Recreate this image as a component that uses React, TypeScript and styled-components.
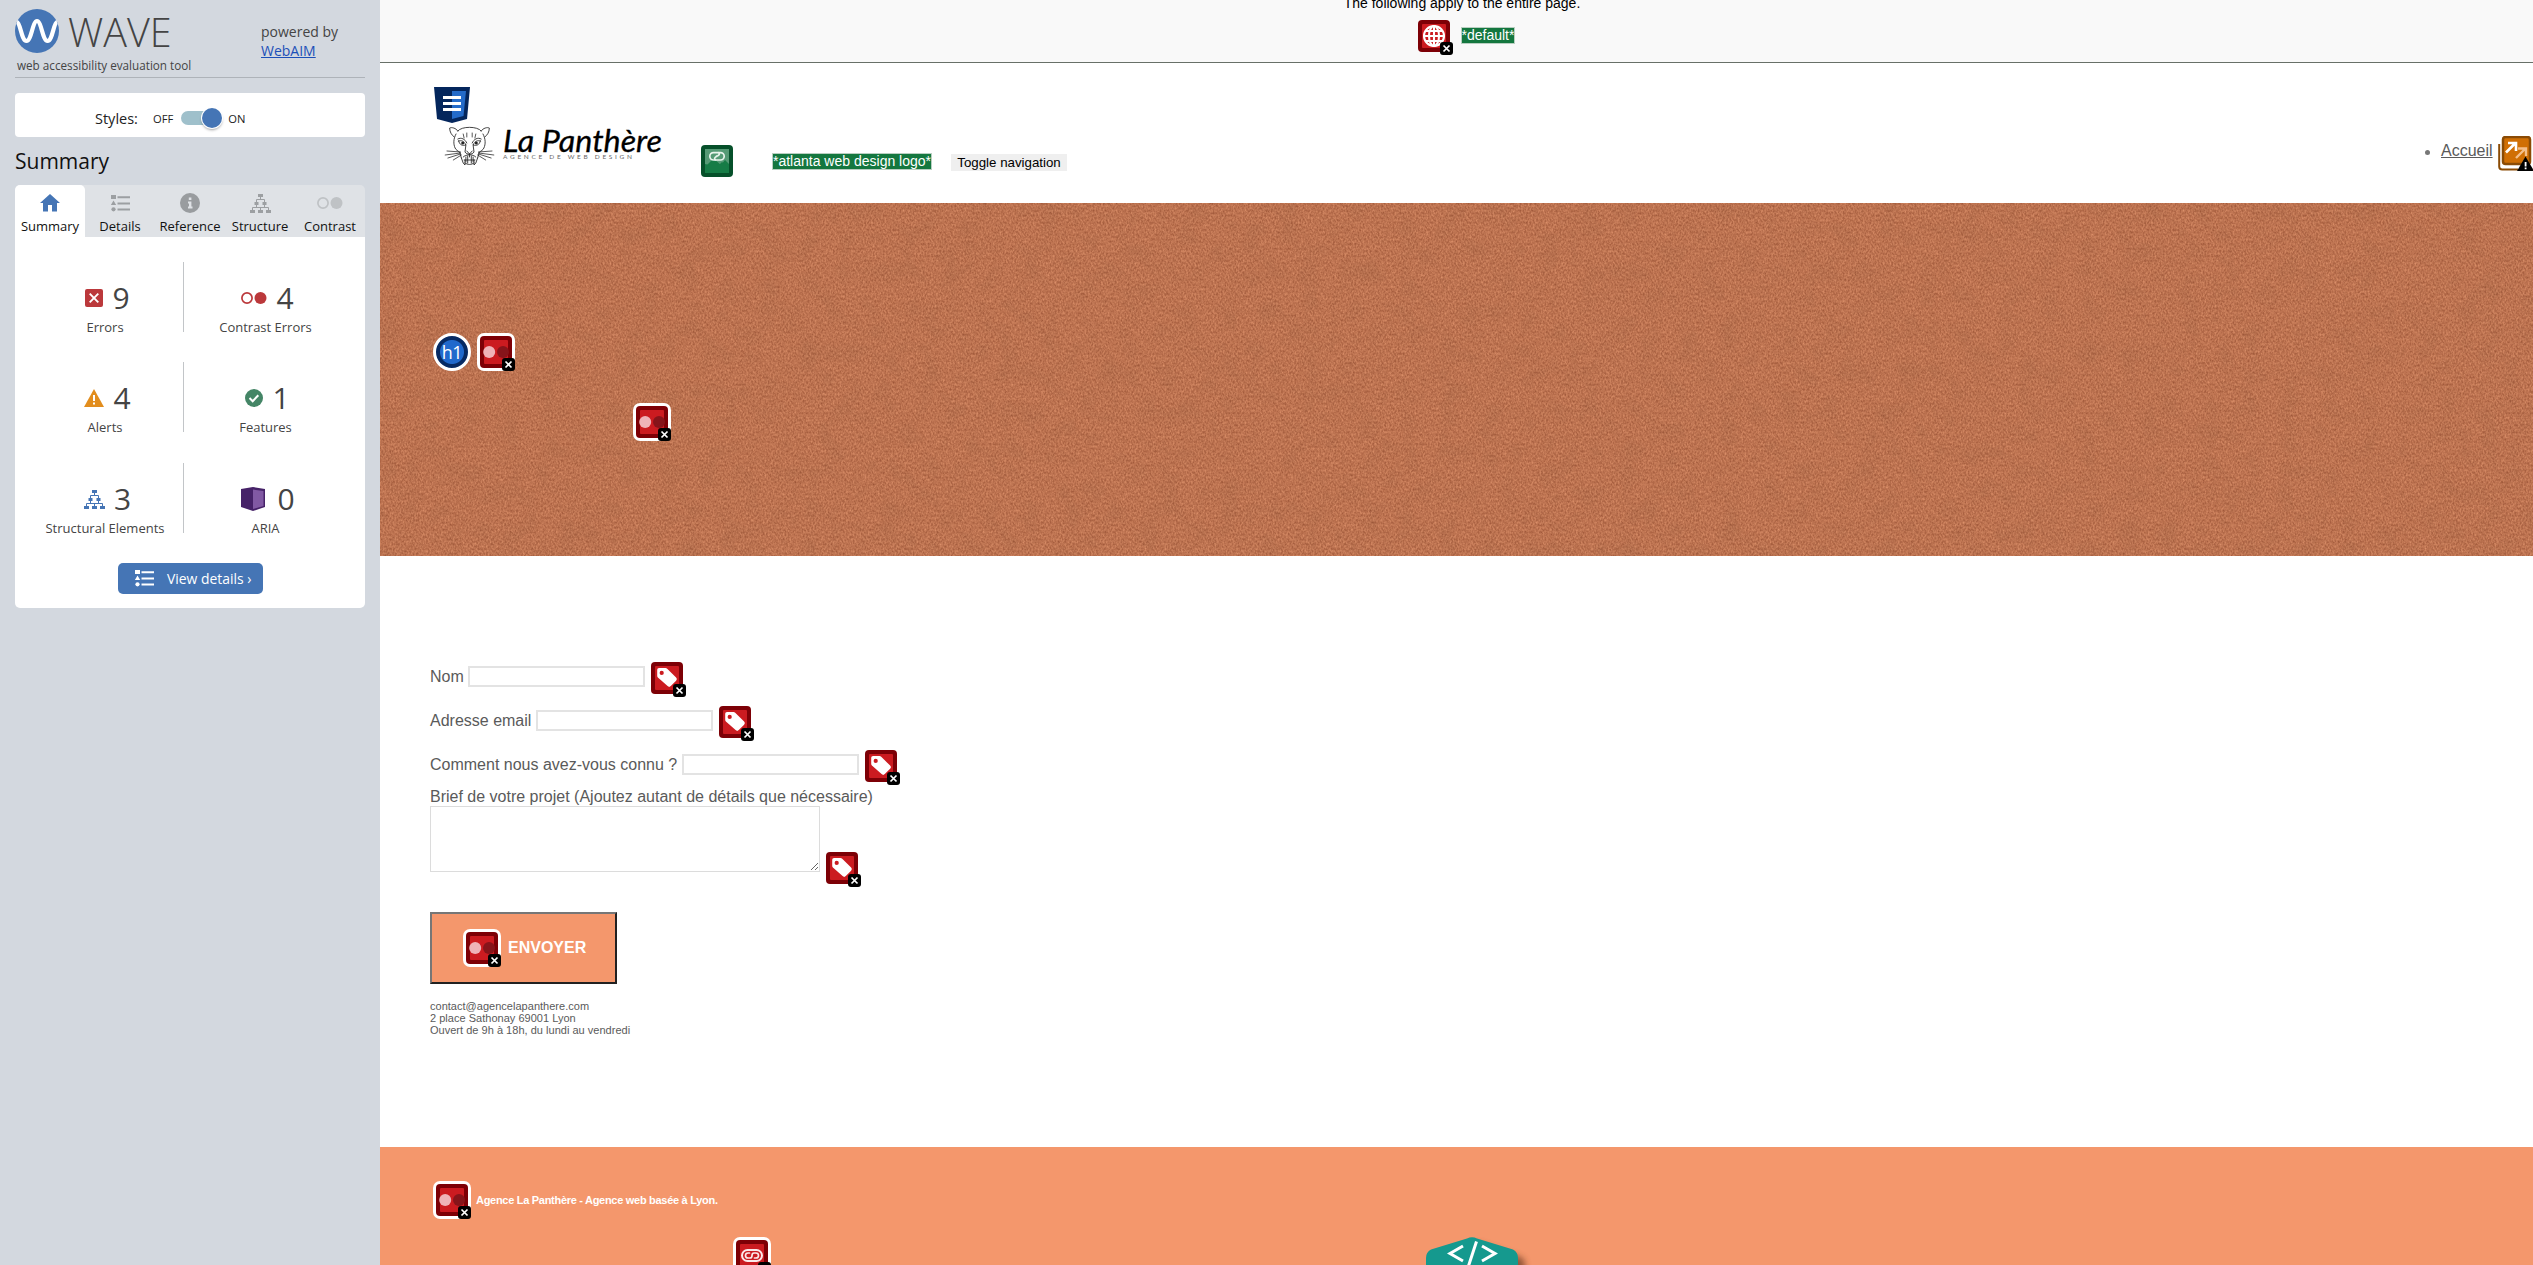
import React from "react";
import styled, { createGlobalStyle, css } from "styled-components";

const GlobalStyle = createGlobalStyle`
  * { box-sizing: border-box; }
  html, body { margin: 0; padding: 0; }
  body { width: 2533px; height: 1265px; overflow: hidden; background: #fff; }
`;

const OPEN = `"Open Sans", "Noto Sans", sans-serif`;
const ARIAL = `"Liberation Sans", Arial, sans-serif`;

const Screen = styled.div`
  display: flex;
  width: 2533px;
  height: 1265px;
  overflow: hidden;
`;

/* ---------- Sidebar ---------- */

const Sidebar = styled.aside`
  flex: 0 0 380px;
  padding: 9px 15px 0;
  background: #d3d8df;
  font-family: ${OPEN};
  color: #444;
`;

const BrandBar = styled.header`
  display: flex;
  height: 69px;
  border-bottom: 1px solid #aeb3b9;
`;

const Brand = styled.div`
  width: 246px;
`;

const BrandRow = styled.div`
  display: flex;
  gap: 9px;
  height: 44px;
`;

const BrandName = styled.span`
  padding-top: 1px;
  font-size: 39.5px;
  font-weight: 300;
  line-height: 44px;
`;

const Tagline = styled.div`
  margin: 4px 0 0 2px;
  font-size: 11.7px;
  line-height: 16px;
  white-space: nowrap;
`;

const Powered = styled.div`
  padding-top: 13px;
  font-size: 14px;
  line-height: 19px;
  a { color: #1c50b8; }
`;

const StylesCard = styled.div`
  display: flex;
  align-items: center;
  height: 44px;
  margin-top: 15px;
  padding: 6px 0 0 80px;
  border-radius: 4px;
  background: #fff;
  color: #222;
`;

const StylesLabel = styled.span`
  width: 58px;
  font-size: 14.5px;
`;

const SwitchText = styled.span`
  font-size: 11.2px;
`;

const Switch = styled.span`
  display: flex;
  justify-content: flex-end;
  align-items: center;
  width: 41px;
  height: 14px;
  margin: 0 6px 0 8px;
  border-radius: 7px;
  background: linear-gradient(to right, #9fc0cb 36px, transparent 36px);
`;

const Knob = styled.span`
  width: 20px;
  height: 20px;
  border-radius: 50%;
  background: #4575b5;
  box-shadow: 0 0 0 1px #fff, 0 2px 3px rgba(0, 0, 0, 0.4);
`;

const SideTitle = styled.h2`
  margin: 10px 0 10px;
  font-size: 21px;
  font-weight: 400;
  line-height: 28px;
  color: #111;
`;

const Tabs = styled.nav`
  display: flex;
  height: 52px;
  border-radius: 5px 5px 0 0;
  background: #dfe2e6;
`;

const Tab = styled.div<{ $active?: boolean }>`
  display: flex;
  flex: 0 0 70px;
  flex-direction: column;
  align-items: center;
  padding-top: 5px;
  border-radius: 5px 5px 0 0;
  background: ${(p) => (p.$active ? "#fff" : "transparent")};
  color: ${(p) => (p.$active ? "#4575b5" : "#9c9fa2")};
`;

const TabIcon = styled.span`
  display: flex;
  align-items: center;
  justify-content: center;
  height: 26px;
`;

const TabLabel = styled.span`
  margin-top: 1px;
  font-size: 13px;
  line-height: 18px;
  color: #111;
`;

const Panel = styled.section`
  height: 371px;
  padding: 25px 12px 0;
  border-radius: 0 0 5px 5px;
  background: #fff;
`;

const StatGrid = styled.div`
  display: grid;
  grid-template-columns: 156px 1px 163px;
  grid-template-rows: 100px 101px 100px;
`;

const StatDivider = styled.span`
  height: 70px;
  background: #c2c5c8;
`;

const Stat = styled.div`
  display: flex;
  flex-direction: column;
  align-items: center;
  padding-top: 16px;
`;

const StatLine = styled.div<{ $gap?: number; $shift?: number }>`
  display: flex;
  align-items: center;
  gap: ${(p) => p.$gap || 9}px;
  height: 40px;
  margin-left: ${(p) => p.$shift || 0}px;
`;

const StatNumber = styled.span`
  font-size: 30px;
  font-weight: 400;
  line-height: 40px;
  color: #444;
`;

const StatLabel = styled.span`
  font-size: 13px;
  line-height: 18px;
`;

const DetailsButton = styled.button`
  display: flex;
  align-items: center;
  gap: 13px;
  width: 145px;
  height: 31px;
  margin: 0 0 0 91px;
  padding: 0 0 1px 17px;
  border: 0;
  border-radius: 5px;
  background: #4575b5;
  color: #fff;
  font: 13.9px ${OPEN};
  white-space: nowrap;
`;

/* ---------- Page ---------- */

const Page = styled.main`
  flex: 1;
  min-width: 0;
  font-family: ${ARIAL};
  font-size: 16px;
  color: #5a5a5a;
`;

const Notice = styled.div`
  display: flex;
  flex-direction: column;
  align-items: center;
  height: 63px;
  padding-left: 11px;
  border-bottom: 1px solid #687068;
  background: #f9f9f9;
  color: #000;
`;

const NoticeText = styled.div`
  height: 20px;
  margin-top: -5px;
  font-size: 14px;
  line-height: 16px;
`;

const NoticeRow = styled.div`
  display: flex;
  gap: 11px;
  padding: 5px 0 0 9px;
`;

const AltText = styled.span<{ $top: number }>`
  height: 17px;
  margin-top: ${(p) => p.$top}px;
  padding: 0 1px;
  background: #14773f;
  outline: 1px solid #b9cfc1;
  outline-offset: -1px;
  color: #fff;
  font-size: 14px;
  line-height: 17px;
  white-space: nowrap;
`;

const SiteHeader = styled.header`
  display: flex;
  height: 140px;
  padding: 24px 0 0 54px;
`;

const LogoColumn = styled.div`
  display: flex;
  flex-direction: column;
  width: 267px;
`;

const HeaderRow = styled.div`
  display: flex;
  flex: 1;
  padding-top: 58px;
`;

const HeaderAlt = styled.div`
  display: flex;
  width: 179px;
  margin-left: 39px;
`;

const ToggleButton = styled.button`
  width: 116px;
  height: 17px;
  margin-top: 9px;
  padding: 0;
  border: 0;
  background: #efefef;
  color: #000;
  font: 13.3px/17px ${ARIAL};
  white-space: nowrap;
`;

const Menu = styled.ul`
  display: flex;
  width: 108px;
  margin: 49px 0 0;
  padding: 0;
  list-style: none;
`;

const MenuItem = styled.li`
  display: flex;
  gap: 5px;
  &::before {
    content: "";
    width: 5px;
    height: 5px;
    margin: 14px 6px 0 0;
    border-radius: 50%;
    background: #777;
  }
  a {
    margin-top: 6px;
    line-height: 18px;
    color: #5a5a5a;
    text-decoration: underline;
  }
`;

const Hero = styled.section`
  display: grid;
  height: 353px;
  overflow: hidden;
  background: #bd7351;
  > * { grid-area: 1 / 1; }
`;

const HeroMarks = styled.div`
  z-index: 1;
  padding: 130px 0 0 53px;
`;

const MarkRow = styled.div<{ $indent?: number; $gapTop?: number }>`
  display: flex;
  gap: 6px;
  margin: ${(p) => p.$gapTop || 0}px 0 0 ${(p) => p.$indent || 0}px;
`;

const FormArea = styled.section`
  height: 591px;
  padding: 106px 0 0 50px;
`;

const Field = styled.div`
  display: flex;
  height: 44px;
`;

const Label = styled.label<{ $width?: number }>`
  width: ${(p) => (p.$width ? `${p.$width}px` : "auto")};
  height: 18px;
  margin-top: 6px;
  line-height: 18px;
  white-space: nowrap;
`;

const Input = styled.input`
  width: 177px;
  height: 21px;
  margin: 4px 6px 0 5px;
  padding: 0;
  border: 2px solid #e3e3e3;
  background: #fff;
`;

const AreaLabel = styled(Label)`
  display: block;
  margin-top: -6px;
`;

const AreaRow = styled.div`
  display: flex;
  gap: 6px;
  height: 106px;
`;

const Area = styled.textarea`
  width: 390px;
  height: 66px;
  border: 1px solid #dcdcdc;
  background: #fff;
`;

const AreaMark = styled.div`
  margin-top: 46px;
`;

const SendButton = styled.button`
  display: flex;
  gap: 7px;
  width: 187px;
  height: 72px;
  padding: 15px 0 0 31px;
  border: 2px solid;
  border-color: #767676 #212121 #212121 #767676;
  background: #f4976c;
  color: #fff;
  font: bold 16px/18px ${ARIAL};
  span:last-child { margin-top: 10px; }
`;

const ButtonText = styled.span`
  height: 18px;
`;

const Contact = styled.address`
  margin-top: 16px;
  font-size: 11px;
  font-style: normal;
  letter-spacing: 0.02px;
  line-height: 12px;
  white-space: nowrap;
`;

const Footer = styled.footer`
  height: 118px;
  padding: 34px 0 0 53px;
  background: #f4976c;
  overflow: hidden;
`;

const FooterText = styled.span`
  margin: 12px 0 0 -1px;
  color: #fff;
  font-size: 11px;
  font-weight: 700;
  letter-spacing: -0.29px;
  line-height: 14px;
`;

const FooterIcons = styled.div`
  display: flex;
  gap: 655px;
  padding: 18px 0 0 300px;
`;

/* ---------- Marks ---------- */

type Tone = "red" | "green";

const MarkBox = styled.span<{ $ring?: boolean }>`
  position: relative;
  display: block;
  flex: none;
  width: ${(p) => (p.$ring ? 38 : 32)}px;
  height: ${(p) => (p.$ring ? 38 : 32)}px;
  ${(p) =>
    p.$ring &&
    css`
      padding: 3px;
      border-radius: 7px;
      background: #fff;
    `}
  > svg { display: block; }
`;

const Badge = styled.i<{ $ring?: boolean }>`
  position: absolute;
  right: ${(p) => (p.$ring ? 0 : -3)}px;
  bottom: ${(p) => (p.$ring ? 0 : -3)}px;
  display: block;
  width: 13px;
  height: 13px;
  border-radius: 3px;
  background: #000;
  svg { display: block; }
`;

const HeadingMark = styled.span`
  display: flex;
  align-items: center;
  justify-content: center;
  width: 38px;
  height: 38px;
  border: 3px solid #fff;
  border-radius: 50%;
  background: radial-gradient(circle, #2069cc 0 11.5px, #062a63 12.5px);
  color: #fff;
  font: 18px/30px ${OPEN};
  letter-spacing: -0.5px;
`;

type Glyph = "contrast" | "label" | "globe" | "link" | "linkedImage";

function Mark({ glyph, ring, tone = "red" }: { glyph: Glyph; ring?: boolean; tone?: Tone }) {
  const outer = tone === "red" ? "#7d0006" : "#06502a";
  const inner = tone === "red" ? "#cb1b20" : "#167c46";
  return (
    <MarkBox $ring={ring}>
      <svg width="32" height="32" viewBox="0 0 32 32">
        <rect width="32" height="32" rx="4" fill={outer} />
        <rect x="4" y="4" width="24" height="24" rx="1" fill={inner} />
        {glyph === "contrast" && (
          <>
            <circle cx="9.2" cy="16" r="6" fill="#efb3b8" />
            <circle cx="23" cy="16" r="6" fill="#86141a" />
          </>
        )}
        {glyph === "label" && (
          <path
            fillRule="evenodd"
            fill="#fff"
            d="M8 6h6.5q1 0 1.7.7l8.9 8.9q1.6 1.6 0 3.2l-5.3 5.3q-1.6 1.6-3.2 0L6.9 15.400q-.7-.7-.7-1.700V7.800Q6.200 6 8 6zM10.700 8.800a2.100 2.100 0 1 0 .01 4.200a2.100 2.100 0 1 0-.01-4.200z"
          />
        )}
        {glyph === "globe" && (
          <g fill="none" stroke="#fff" strokeWidth="2.1">
            <circle cx="16" cy="16" r="10" />
            <ellipse cx="16" cy="16" rx="5" ry="10" />
            <path d="M16 6v20M6 16h20M8 11h16M8 21h16" />
          </g>
        )}
        {glyph === "link" && (
          <g fill="none" stroke="#fbe9ea" strokeWidth="2" strokeLinecap="round">
            <rect x="6" y="10" width="20" height="11" rx="5.5" />
            <path d="M13.500 13h-1.500a2.500 2.500 0 0 0 0 5h2q2 0 2-2.500t2-2.500h2a2.500 2.500 0 0 1 0 5h-1.500" strokeWidth="1.700" />
          </g>
        )}
        {glyph === "linkedImage" && (
          <>
            <path d="M4 4h24v15l-4-4-4 5-7-6-5 6-4-1z" fill="#559a75" />
            <path d="M4 22l8-8 5 7 4-4 7 6v5H4z" fill="#167c46" />
            <g fill="none" stroke="#e9f4ed" strokeWidth="1.700" strokeLinecap="round">
              <path d="M14.500 15h-2a3.700 3.700 0 0 1 0-7.400h4.500q1.800 0 1.300 1.700-.3 1-1.800 1.700H15.500" />
              <path d="M17.500 7.600h2a3.700 3.700 0 0 1 0 7.400H15q-1.800 0-1.300-1.700.3-1 1.800-1.700" />
            </g>
          </>
        )}
      </svg>
      {tone === "red" && (
        <Badge $ring={ring}>
          <svg width="13" height="13" viewBox="0 0 13 13">
            <path d="M3.500 3.500l6 6M9.500 3.500l-6 6" stroke="#fff" strokeWidth="1.700" />
          </svg>
        </Badge>
      )}
    </MarkBox>
  );
}

/* ---------- Drawings ---------- */

const WaveLogo = () => (
  <svg width="44" height="44" viewBox="0 0 44 44">
    <circle cx="22" cy="22" r="22" fill="#4575b5" />
    <path
      d="M2 13c3.500 1 4.500 19 9.500 19S17.500 12 22 12s5.500 20 10.500 20S38.500 14 42 13"
      fill="none"
      stroke="#fff"
      strokeWidth="4.200"
    />
  </svg>
);

const HomeIcon = () => (
  <svg width="20" height="18" viewBox="0 0 20 18">
    <path d="M10 0l10 9h-3v8.500h-5V11H8v6.500H3V9H0z" fill="#4575b5" />
  </svg>
);

const ListIcon = () => (
  <svg width="19" height="17" viewBox="0 0 19 17" fill="currentColor">
    <path d="M0 0h5v4H0zM2.500 5.500l2.700 4.500H-.2zM6.500 1.200H19v2H6.500zM6.500 7.500H19v2H6.500zM6.500 13.500H19v2H6.500z" />
    <circle cx="2.500" cy="14.300" r="2.100" />
  </svg>
);

const InfoIcon = () => (
  <svg width="20" height="20" viewBox="0 0 20 20">
    <circle cx="10" cy="10" r="10" fill="#999c9f" />
    <path d="M8.800 4.500h2.600v2.600H8.800zM8 8.500h3.400v5h1.100v2H8v-2h1v-3H8z" fill="#dfe2e6" />
  </svg>
);

const TreeIcon = () => (
  <svg width="21" height="19" viewBox="0 0 21 19">
    <path
      d="M8 0h5v3H8zM4.500 8h4v3h-4zM12.500 8h4v3h-4zM0 16h5v3H0zM8 16h5v3H8zM16 16h5v3h-5z"
      fill="currentColor"
    />
    <path
      d="M10.500 3v2.500M6.500 8V5.500h8V8M6.500 11v2.500M14.500 11v2.500M2.500 16v-2.500h16V16M10.500 13.500V16"
      fill="none"
      stroke="currentColor"
    />
  </svg>
);

const DotsIcon = ({ color }: { color: string }) => (
  <svg width="26" height="12" viewBox="0 0 26 12">
    <circle cx="6" cy="6" r="5.100" fill="none" stroke={color} strokeWidth="1.700" />
    <circle cx="19.500" cy="6" r="6" fill={color} />
  </svg>
);

const ErrorIcon = () => (
  <svg width="18" height="18" viewBox="0 0 18 18">
    <rect width="18" height="18" rx="2" fill="#bb383b" />
    <path d="M4.700 4.700l8.600 8.600M13.300 4.700l-8.600 8.600" stroke="#fff" strokeWidth="1.900" />
  </svg>
);

const AlertIcon = () => (
  <svg width="20" height="18" viewBox="0 0 20 18">
    <path d="M10 0l10 18H0z" fill="#e28d1d" />
    <path d="M9 6h2v6H9zM9 13.500h2v2H9z" fill="#fff" />
  </svg>
);

const CheckIcon = () => (
  <svg width="18" height="18" viewBox="0 0 18 18">
    <circle cx="9" cy="9" r="9" fill="#448566" />
    <path d="M4.500 9l3.200 3.200 5.600-6" fill="none" stroke="#fff" strokeWidth="2" />
  </svg>
);

const CubeIcon = () => (
  <svg width="24" height="24" viewBox="0 0 24 24">
    <path d="M0 2L12 0l12 2v18l-12 4L0 20z" fill="#462268" />
    <path d="M12 2.500l10.500 1.500v15L12 22z" fill="#8159a3" />
  </svg>
);

const ShieldIcon = () => (
  <svg width="36" height="36" viewBox="0 0 36 36">
    <path d="M0 0h36l-3 32-15 4-15-4z" fill="#04265c" />
    <path d="M18 4h14l-2.500 25L18 32z" fill="#246bc9" />
    <path d="M9 9h18v3H9zM9 15h18v3H9zM9 21h18v3H9z" fill="#fff" />
  </svg>
);

const PantherLogo = () => (
  <svg width="230" height="45" viewBox="0 0 230 45">
    <g fill="none" stroke="#222" strokeWidth=".9" strokeLinecap="round" transform="translate(6.700 0) scale(.9 1)">
      <path d="M19 8c4-5 22-5 26 0M19 8c-2-3-7-4-9-3 0 4 2 7 5 9M45 8c2-3 7-4 9-3 0 4-2 7-5 9" />
      <path d="M17 11c-3 5-3 10-1 14 1 2 3 3 5 4l2 6M47 11c3 5 3 10 1 14-1 2-3 3-5 4l-2 6" />
      <path d="M20 18c3-1 6 0 8 4-4 1-7 0-8-4zM44 18c-3-1-6 0-8 4 4 1 7 0 8-4z" />
      <path d="M19 16c4-2 8 0 10 4M45 16c-4-2-8 0-10 4" />
      <path d="M28 22l-1 7c2 3 8 3 10 0l-1-7M29 28l3 3 3-3M32 31v3" />
      <path d="M23 35l2 5 2 2v-5M41 35l-2 5-2 2v-5M25 34c3-3 11-3 14 0M26 37h12M28 34v5M30 33v7M34 33v7M36 34v5M27 40c3 2 7 2 10 0" />
      <path d="M25 11l1 4M29 10v4M39 11l-1 4M35 10v4" strokeWidth=".8" />
      <path d="M22 29L7 28M22 30L5 32M22 31L8 35M23 32l-9 5M42 29l15-1M42 30l17 2M42 31l14 4M41 32l9 5" strokeWidth=".8" />
    </g>
    <g fill="#222">
      <circle cx="28.700" cy="20" r="1.500" />
      <circle cx="42.300" cy="20" r="1.500" />
    </g>
    <text
      x="69"
      y="29"
      textLength="159"
      lengthAdjust="spacingAndGlyphs"
      fontFamily="Lato, sans-serif"
      fontStyle="italic"
      fontWeight="400"
      fontSize="31"
      fill="#000"
      stroke="#000"
      strokeWidth=".3"
    >
      La Panthère
    </text>
    <text x="69" y="35.500" textLength="129" fontFamily="Lato, sans-serif" fontWeight="400" fontSize="6.500" fill="#666">
      AGENCE DE WEB DESIGN
    </text>
  </svg>
);

const MenuMark = () => (
  <svg width="35" height="35" viewBox="0 0 35 35">
    <path d="M1.200 8v22.500q0 3 3 3H20" fill="none" stroke="#8a4b05" strokeWidth="2" />
    <rect x="5" y="1" width="27" height="27" rx="2.500" fill="#d06f04" stroke="#8a4b05" strokeWidth="2.500" />
    <path d="M18 22l9-9M20 12.500h8V20" fill="none" stroke="#f3bf8b" strokeWidth="2.400" />
    <path d="M8 16.500l9-9M10 7h8v8" fill="none" stroke="#fff" strokeWidth="2.600" />
    <path d="M27.500 20.500L36 35H19z" fill="#000" />
    <path d="M26.700 26h1.800v4.500h-1.800zM26.700 31.500h1.800v1.800h-1.800z" fill="#fff" />
  </svg>
);

const HeroTexture = () => (
  <svg width="2153" height="353">
    <filter id="grain" x="0" y="0" width="100%" height="100%" colorInterpolationFilters="sRGB">
      <feTurbulence type="fractalNoise" baseFrequency="0.6 0.42" numOctaves="2" seed="7" />
      <feColorMatrix
        type="matrix"
        values=".3 0 0 0 .592  .28 0 0 0 .312  .24 0 0 0 .198  0 0 0 0 1"
      />
    </filter>
    <filter id="blotch" x="0" y="0" width="100%" height="100%" colorInterpolationFilters="sRGB">
      <feTurbulence type="fractalNoise" baseFrequency="0.05" numOctaves="3" seed="3" />
      <feColorMatrix type="matrix" values="0 0 0 0 .45  0 0 0 0 .3  0 0 0 0 .2  .9 0 0 0 -.38" />
    </filter>
    <rect width="2153" height="353" filter="url(#grain)" />
    <rect width="2153" height="353" filter="url(#blotch)" opacity=".25" />
  </svg>
);

const CodeHexagon = () => (
  <svg width="110" height="40" viewBox="0 0 110 40">
    <defs>
      <filter id="soft" x="-20%" y="-20%" width="140%" height="140%">
        <feGaussianBlur stdDeviation="3" />
      </filter>
    </defs>
    <path d="M12 18L52 6l42 14q5 2 5 8v30H12z" fill="#6b3a20" opacity=".7" filter="url(#soft)" />
    <path d="M0 45V21q0-6 5-8.500L41 1.500Q46 -1 51 1.500L87 12.500q5 2.500 5 8.500v24z" fill="#15998e" />
    <path d="M37 9L24 16.500 37 24M56 9l13 7.500L56 24M50.500 4.500L41.500 32" fill="none" stroke="#fff" strokeWidth="3" />
  </svg>
);

/* ---------- Data ---------- */

const tabs = [
  { label: "Summary", icon: <HomeIcon />, active: true },
  { label: "Details", icon: <ListIcon /> },
  { label: "Reference", icon: <InfoIcon /> },
  { label: "Structure", icon: <TreeIcon /> },
  { label: "Contrast", icon: <DotsIcon color="#bfc2c5" /> },
];

const TreeBlue = styled.span`
  display: flex;
  color: #4575b5;
`;

type StatData = { label: string; value: number; icon: React.ReactNode; gap?: number; shift?: number };

const stats: StatData[][] = [
  [
    { label: "Errors", value: 9, icon: <ErrorIcon />, shift: 5 },
    { label: "Contrast Errors", value: 4, icon: <DotsIcon color="#bb383b" />, shift: 4 },
  ],
  [
    { label: "Alerts", value: 4, icon: <AlertIcon />, shift: 5 },
    { label: "Features", value: 1, icon: <CheckIcon />, shift: 4 },
  ],
  [
    { label: "Structural Elements", value: 3, icon: <TreeBlue><TreeIcon /></TreeBlue>, shift: 5 },
    { label: "ARIA", value: 0, icon: <CubeIcon />, gap: 12, shift: 5 },
  ],
];

const fields = [
  { label: "Nom", width: 33 },
  { label: "Adresse email", width: 101 },
  { label: "Comment nous avez-vous connu ?", width: 247 },
];

const StatCell = ({ data }: { data: StatData }) => (
  <Stat>
    <StatLine $gap={data.gap} $shift={data.shift}>
      {data.icon}
      <StatNumber>{data.value}</StatNumber>
    </StatLine>
    <StatLabel>{data.label}</StatLabel>
  </Stat>
);

export default function App() {
  return (
    <Screen>
      <GlobalStyle />
      <Sidebar>
        <BrandBar>
          <Brand>
            <BrandRow>
              <WaveLogo />
              <BrandName>WAVE</BrandName>
            </BrandRow>
            <Tagline>web accessibility evaluation tool</Tagline>
          </Brand>
          <Powered>
            powered by
            <br />
            <a href="#webaim">WebAIM</a>
          </Powered>
        </BrandBar>

        <StylesCard>
          <StylesLabel>Styles:</StylesLabel>
          <SwitchText>OFF</SwitchText>
          <Switch>
            <Knob />
          </Switch>
          <SwitchText>ON</SwitchText>
        </StylesCard>

        <SideTitle>Summary</SideTitle>
        <Tabs>
          {tabs.map((t) => (
            <Tab key={t.label} $active={t.active}>
              <TabIcon>{t.icon}</TabIcon>
              <TabLabel>{t.label}</TabLabel>
            </Tab>
          ))}
        </Tabs>
        <Panel>
          <StatGrid>
            {stats.map(([left, right]) => (
              <React.Fragment key={left.label}>
                <StatCell data={left} />
                <StatDivider />
                <StatCell data={right} />
              </React.Fragment>
            ))}
          </StatGrid>
          <DetailsButton>
            <ListIcon />
            View details ›
          </DetailsButton>
        </Panel>
      </Sidebar>

      <Page>
        <Notice>
          <NoticeText>The following apply to the entire page.</NoticeText>
          <NoticeRow>
            <Mark glyph="globe" />
            <AltText $top={7}>*default*</AltText>
          </NoticeRow>
        </Notice>

        <SiteHeader>
          <LogoColumn>
            <ShieldIcon />
            <PantherLogo />
          </LogoColumn>
          <HeaderRow>
            <Mark glyph="linkedImage" tone="green" />
            <HeaderAlt>
              <AltText $top={8}>*atlanta web design logo*</AltText>
            </HeaderAlt>
            <ToggleButton>Toggle navigation</ToggleButton>
          </HeaderRow>
          <Menu>
            <MenuItem>
              <a href="#accueil">Accueil</a>
              <MenuMark />
            </MenuItem>
          </Menu>
        </SiteHeader>

        <Hero>
          <HeroTexture />
          <HeroMarks>
            <MarkRow>
              <HeadingMark>h1</HeadingMark>
              <Mark glyph="contrast" ring />
            </MarkRow>
            <MarkRow $indent={200} $gapTop={32}>
              <Mark glyph="contrast" ring />
            </MarkRow>
          </HeroMarks>
        </Hero>

        <FormArea>
          {fields.map((f) => (
            <Field key={f.label}>
              <Label $width={f.width}>{f.label}</Label>
              <Input />
              <Mark glyph="label" />
            </Field>
          ))}
          <AreaLabel>Brief de votre projet (Ajoutez autant de détails que nécessaire)</AreaLabel>
          <AreaRow>
            <Area />
            <AreaMark>
              <Mark glyph="label" />
            </AreaMark>
          </AreaRow>
          <SendButton>
            <Mark glyph="contrast" ring />
            <ButtonText>ENVOYER</ButtonText>
          </SendButton>
          <Contact>
            contact@agencelapanthere.com
            <br />2 place Sathonay 69001 Lyon
            <br />
            Ouvert de 9h à 18h, du lundi au vendredi
          </Contact>
        </FormArea>

        <Footer>
          <MarkRow>
            <Mark glyph="contrast" ring />
            <FooterText>Agence La Panthère - Agence web basée à Lyon.</FooterText>
          </MarkRow>
          <FooterIcons>
            <Mark glyph="link" ring />
            <CodeHexagon />
          </FooterIcons>
        </Footer>
      </Page>
    </Screen>
  );
}
